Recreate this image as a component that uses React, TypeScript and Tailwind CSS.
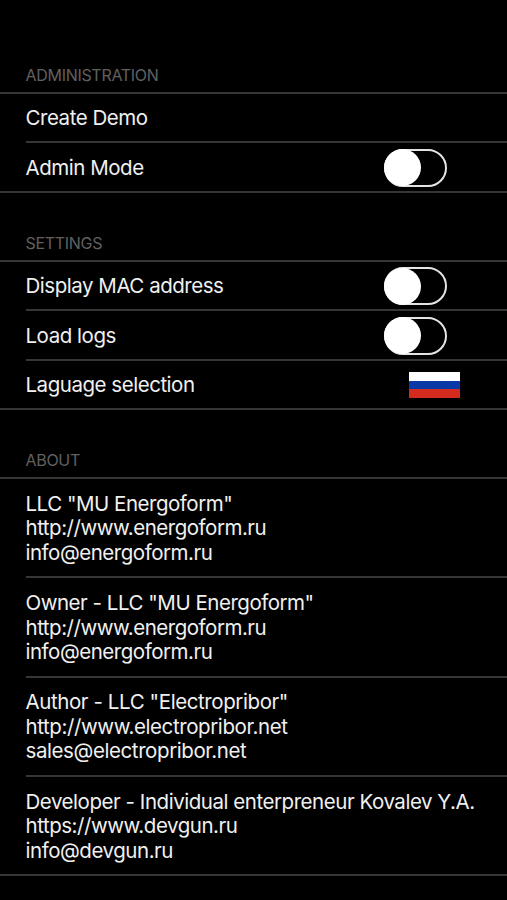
import { useState, type ReactNode } from "react"

type Contact = { lines: string[]; tracking: string }

const contacts: Contact[] = [
  {
    lines: ['LLC "MU Energoform"', "http://www.energoform.ru", "info@energoform.ru"],
    tracking: "tracking-[-0.48px]",
  },
  {
    lines: ['Owner - LLC "MU Energoform"', "http://www.energoform.ru", "info@energoform.ru"],
    tracking: "tracking-[-0.48px]",
  },
  {
    lines: ['Author - LLC "Electropribor"', "http://www.electropribor.net", "sales@electropribor.net"],
    tracking: "tracking-[-0.41px]",
  },
  {
    lines: ["Developer - Individual enterpreneur Kovalev Y.A.", "https://www.devgun.ru", "info@devgun.ru"],
    tracking: "tracking-[-0.46px]",
  },
]

function Divider({ inset = false }: { inset?: boolean }) {
  return <div className={inset ? "ml-[26px] h-[2px] bg-[#363636]" : "h-[2px] bg-[#363636]"} />
}

function SectionTitle({ children }: { children: string }) {
  return (
    <h2 className="mb-[7px] pl-[25.5px] text-[16px] leading-[20px] tracking-[-0.3px] text-[#606060]">
      {children}
    </h2>
  )
}

function Row({ label, children }: { label: string; children?: ReactNode }) {
  return (
    <div className="flex h-[47.45px] items-center justify-between pl-[25.5px]">
      <span className="pt-[2px]">{label}</span>
      {children}
    </div>
  )
}

function Toggle({ label }: { label: string }) {
  const [on, setOn] = useState(false)

  return (
    <button
      role="switch"
      aria-checked={on}
      aria-label={label}
      onClick={() => setOn(!on)}
      className={
        on
          ? "mt-[1px] mr-[60px] flex h-[38px] w-[63px] items-center justify-end rounded-full border-2 border-[#e4e4e4]"
          : "mt-[1px] mr-[60px] flex h-[38px] w-[63px] items-center rounded-full border-2 border-[#e4e4e4]"
      }
    >
      <span className="-mx-[2px] size-[37px] shrink-0 rounded-full bg-white" />
    </button>
  )
}

function RussianFlag() {
  return (
    <div className="mt-[1px] mr-[47px] flex h-[26px] w-[51px] flex-col">
      <div className="flex-1 bg-white" />
      <div className="flex-1 bg-[#0839a6]" />
      <div className="flex-1 bg-[#d52b1e]" />
    </div>
  )
}

export default function App() {
  return (
    <main className="h-[900px] w-full overflow-hidden bg-black font-['Inter',sans-serif] text-[20.5px] leading-[24.6px] tracking-[-0.47px] whitespace-nowrap text-[#f0f0f0]">
      <section className="pt-[65px]">
        <SectionTitle>ADMINISTRATION</SectionTitle>
        <Divider />
        <Row label="Create Demo" />
        <Divider inset />
        <Row label="Admin Mode">
          <Toggle label="Admin Mode" />
        </Row>
        <Divider />
      </section>

      <section className="pt-[40px]">
        <SectionTitle>SETTINGS</SectionTitle>
        <Divider />
        <Row label="Display MAC address">
          <Toggle label="Display MAC address" />
        </Row>
        <Divider inset />
        <Row label="Load logs">
          <Toggle label="Load logs" />
        </Row>
        <Divider inset />
        <Row label="Laguage selection">
          <RussianFlag />
        </Row>
        <Divider />
      </section>

      <section className="pt-[40px]">
        <SectionTitle>ABOUT</SectionTitle>
        <Divider />
        {contacts.map((contact, i) => (
          <div key={i} className={contact.tracking}>
            <div className="flex h-[97.3px] flex-col justify-center pt-[1.5px] pl-[25.5px]">
              {contact.lines.map((line) => (
                <p key={line}>{line}</p>
              ))}
            </div>
            <Divider inset={i < contacts.length - 1} />
          </div>
        ))}
      </section>
    </main>
  )
}
